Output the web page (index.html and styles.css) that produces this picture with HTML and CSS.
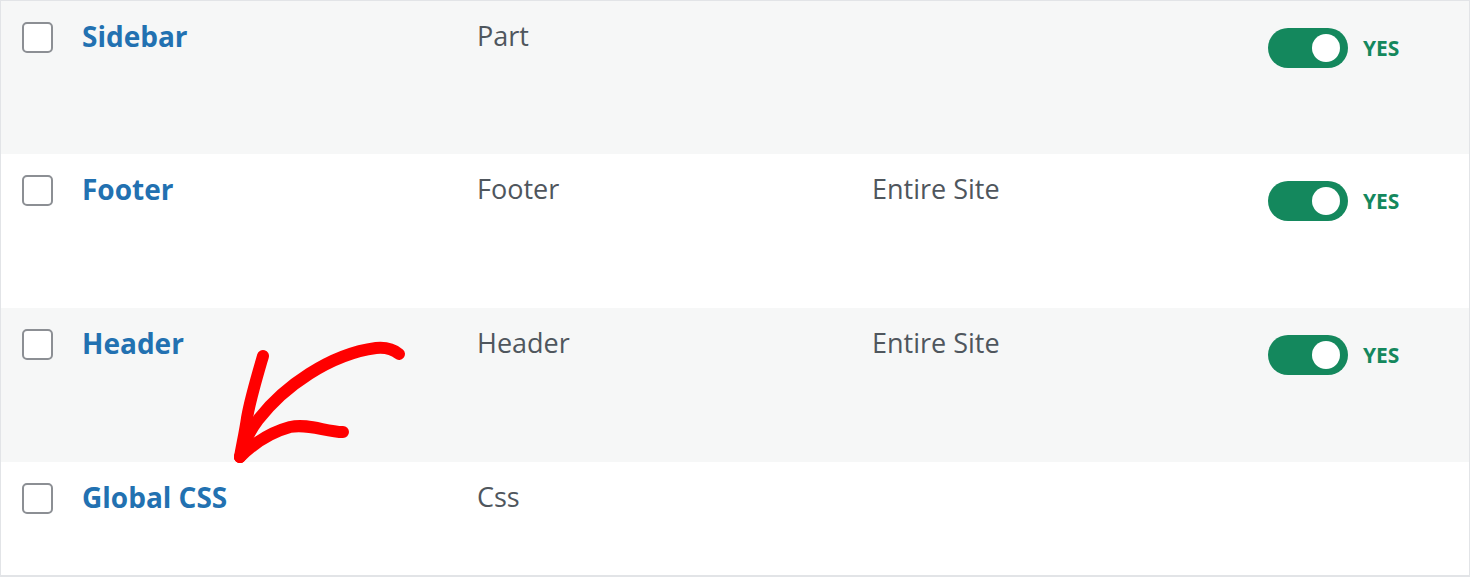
FILE: index.html
```html
<!DOCTYPE html>
<html lang="en">
  <head>
    <meta charset="UTF-8" />
    <meta name="viewport" content="width=device-width, initial-scale=1.0" />
    <title>Templates</title>
    <link rel="stylesheet" href="styles.css">
  </head>
  <body>
    <section class="list">
      <div class="row alt first">
        <div class="cell check"><span class="box"></span></div>
        <div class="cell"><a class="row-title" href="#">Sidebar</a></div>
        <div class="cell">Part</div>
        <div class="cell"></div>
        <div class="cell status">
          <span class="toggle"><span class="knob"></span></span>
          <span class="yes">YES</span>
        </div>
      </div>
      <div class="row">
        <div class="cell check"><span class="box"></span></div>
        <div class="cell"><a class="row-title" href="#">Footer</a></div>
        <div class="cell">Footer</div>
        <div class="cell">Entire Site</div>
        <div class="cell status">
          <span class="toggle"><span class="knob"></span></span>
          <span class="yes">YES</span>
        </div>
      </div>
      <div class="row alt">
        <div class="cell check"><span class="box"></span></div>
        <div class="cell"><a class="row-title" href="#">Header</a></div>
        <div class="cell">Header</div>
        <div class="cell">Entire Site</div>
        <div class="cell status">
          <span class="toggle"><span class="knob"></span></span>
          <span class="yes">YES</span>
        </div>
      </div>
      <div class="row last">
        <div class="cell check"><span class="box"></span></div>
        <div class="cell"><a class="row-title" href="#">Global CSS</a></div>
        <div class="cell">Css</div>
        <div class="cell"></div>
        <div class="cell status"></div>
      </div>

      <!-- hand drawn arrow pointing at Global CSS -->
      <svg class="arrow" width="200" height="140" viewBox="220 330 200 140">
        <g fill="none" stroke="#ff0000" stroke-width="12" stroke-linecap="round" stroke-linejoin="round">
          <path d="M399 354 C393 349 386 347 376 348 C330 354 283 387 258 420 C249 432 243 444 240 457" />
          <path d="M263 356 C256 380 250 400 247 418 C245 432 242 445 240 457" />
          <path d="M240 457 C252 445 268 433 290 427 C308 423 326 432 343 432" />
        </g>
      </svg>
    </section>
  </body>
</html>
```

FILE: styles.css
```css
body {
  margin: 0;
  padding: 0;
  background: #ffffff;
  font-family: "Open Sans", "Noto Sans", Arial, sans-serif;
  font-size: 27px;
  color: #4f565d;
}

.list {
  position: relative;
  width: 1468px;
  border: 1px solid #e2e4e7;
  border-bottom-width: 2px;
}

.row {
  display: grid;
  grid-template-columns: 65px 395px 395px 395px 1fr;
  height: 154px;
  background: #ffffff;
}

.row.alt {
  background: #f6f7f7;
}

.row.first {
  height: 153px;
}

.row.last {
  height: 113px;
}

.cell {
  padding: 15px 0 0 16px;
  line-height: 40px;
}

.check {
  padding: 21px 0 0 21px;
}

.box {
  display: block;
  width: 27px;
  height: 27px;
  border: 2px solid #8c8f94;
  border-radius: 5px;
  background: #ffffff;
}

.row-title {
  color: #2271b1;
  font-size: 28px;
  font-weight: 700;
  text-decoration: none;
}

.status {
  display: flex;
  align-items: flex-start;
  gap: 15px;
  padding: 27px 0 0 17px;
}

.toggle {
  display: flex;
  align-items: center;
  justify-content: flex-end;
  width: 80px;
  height: 40px;
  border-radius: 20px;
  background: #14885d;
  box-sizing: border-box;
  padding-right: 8px;
}

.knob {
  width: 28px;
  height: 28px;
  border-radius: 50%;
  background: #ffffff;
}

.yes {
  color: #14885d;
  font-size: 21px;
  font-weight: 700;
  line-height: 41px;
}

.arrow {
  position: absolute;
  left: 219px;
  top: 329px;
}
```
